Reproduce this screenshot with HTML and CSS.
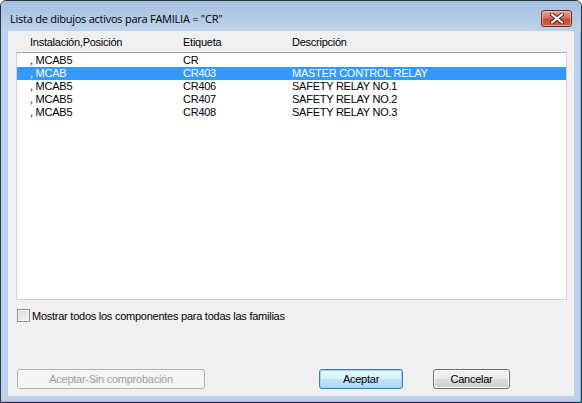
FILE: index.html
```html
<!DOCTYPE html>
<html lang="es">
<head>
<meta charset="utf-8">
<title>Lista de dibujos activos</title>
<link rel="stylesheet" href="styles.css">
</head>
<body>
<div class="window">
  <div class="titlebar">
    <span class="title">Lista de dibujos activos para FAMILIA = "CR"</span>
    <button class="close" aria-label="Cerrar">
      <svg width="14" height="11" viewBox="0 0 14 11">
        <path d="M2 1.5 L12 9.5 M12 1.5 L2 9.5" stroke="#3a2a28" stroke-width="4" stroke-linecap="round"/>
        <path d="M2 1.5 L12 9.5 M12 1.5 L2 9.5" stroke="#ffffff" stroke-width="2.2" stroke-linecap="round"/>
      </svg>
    </button>
  </div>
  <div class="client">
    <div class="header cols">
      <span>Instalación,Posición</span>
      <span>Etiqueta</span>
      <span>Descripción</span>
    </div>
    <div class="list">
      <div class="row cols"><span>, MCAB5</span><span>CR</span><span></span></div>
      <div class="row cols selected"><span>, MCAB</span><span>CR403</span><span>MASTER CONTROL RELAY</span></div>
      <div class="row cols"><span>, MCAB5</span><span>CR406</span><span>SAFETY RELAY NO.1</span></div>
      <div class="row cols"><span>, MCAB5</span><span>CR407</span><span>SAFETY RELAY NO.2</span></div>
      <div class="row cols"><span>, MCAB5</span><span>CR408</span><span>SAFETY RELAY NO.3</span></div>
    </div>
    <label class="check">
      <span class="box"></span>
      <span>Mostrar todos los componentes para todas las familias</span>
    </label>
    <div class="buttons">
      <button class="btn disabled">Aceptar-Sin comprobación</button>
      <span class="spacer"></span>
      <button class="btn default">Aceptar</button>
      <button class="btn normal">Cancelar</button>
    </div>
  </div>
</div>
</body>
</html>
```

FILE: styles.css
```css
html, body {
  margin: 0;
  padding: 0;
  background: #ffffff;
}
body {
  font-family: "Liberation Sans", Arial, sans-serif;
  font-size: 11px;
  letter-spacing: -0.25px;
  color: #000;
}
.window {
  width: 582px;
  height: 403px;
  box-sizing: border-box;
  border: 1px solid #2c3642;
  border-radius: 6px 6px 0 0;
  background: #bcd2ea;
  box-shadow: inset -1px -1px 0 #5ed0e6;
  display: flex;
  flex-direction: column;
  padding: 0 7px 6px 7px;
}
.titlebar {
  height: 30px;
  flex: none;
  display: flex;
  align-items: flex-start;
  justify-content: space-between;
  margin: 0 -7px;
  padding: 0 9px 0 9px;
  background: linear-gradient(#a6c0df, #b4cbe6 60%, #bdd3ea);
  border-radius: 5px 5px 0 0;
}
.title {
  font-family: "Open Sans", "Noto Sans", sans-serif;
  font-size: 11px;
  padding-top: 11px;
  line-height: 14px;
  color: #000;
  letter-spacing: -0.25px;
}
.close {
  margin-top: 9px;
  width: 31px;
  height: 17px;
  padding: 0;
  border: 1px solid #6b2c22;
  border-radius: 3px;
  background: linear-gradient(#e9a597, #d8705e 45%, #c44a34 55%, #d0664e);
  box-shadow: inset 0 0 0 1px rgba(255,220,210,0.45);
  display: flex;
  align-items: center;
  justify-content: center;
}
.client {
  flex: 1;
  background: #f0f0f0;
  display: flex;
  flex-direction: column;
  padding: 0 7px 7px 8px;
}
.cols {
  display: grid;
  grid-template-columns: 153px 109px 1fr;
}
.header {
  height: 21px;
  box-sizing: border-box;
  padding: 5px 0 0 14px;
  line-height: 13px;
  color: #000;
}
.list {
  height: 248px;
  box-sizing: border-box;
  background: #ffffff;
  border: 1px solid #d0d0d0;
  border-top-color: #a8a8a8;
  padding-top: 1px;
}
.row {
  height: 13px;
  line-height: 13px;
  padding-left: 13px;
  white-space: nowrap;
}
.row.selected {
  background: #3399ff;
  color: #ffffff;
}
.check {
  display: flex;
  align-items: center;
  gap: 2px;
  margin-top: 9px;
  margin-left: 1px;
  height: 13px;
}
.box {
  width: 11px;
  height: 11px;
  border: 1px solid #8e8f8f;
  background: linear-gradient(135deg, #dcdcdc, #f6f6f6);
  box-shadow: inset 0 0 0 1px #f4f4f4;
}
.buttons {
  margin-top: auto;
  display: flex;
  align-items: center;
  gap: 30px;
  padding: 0 57px 0 1px;
}
.spacer {
  flex: 1;
}
.btn {
  height: 20px;
  box-sizing: border-box;
  font-family: "Liberation Sans", Arial, sans-serif;
  font-size: 11px;
  letter-spacing: -0.25px;
  padding: 0;
  border-radius: 3px;
  color: #000;
}
.btn.disabled {
  width: 188px;
  border: 1px solid #adb2b5;
  background: #f4f4f4;
  color: #a0a0a0;
}
.btn.default {
  width: 84px;
  border: 1px solid #3c7fb1;
  background: linear-gradient(#eaf6fd, #d9f0fc 50%, #bee6fd 50%, #a7d9f5);
  box-shadow: inset 0 0 0 1px #8fd8f8;
}
.btn.normal {
  width: 77px;
  border: 1px solid #707070;
  background: linear-gradient(#f2f2f2, #ebebeb 50%, #dddddd 50%, #cfcfcf);
  box-shadow: inset 0 0 0 1px #fcfcfc;
}
```
